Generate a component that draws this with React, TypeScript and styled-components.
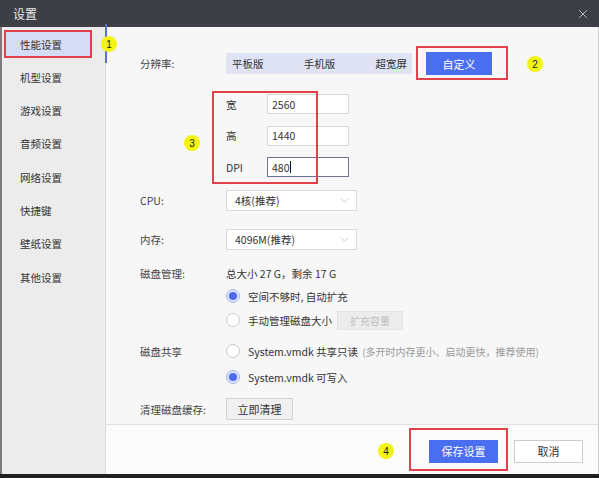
import React from "react";
import styled, { createGlobalStyle } from "styled-components";
import { ChevronDown, X } from "lucide-react";

const Global = createGlobalStyle`
  * { box-sizing: border-box; }
  html, body { margin: 0; padding: 0; background: #222; }
  body { font-family: "Noto Sans CJK SC", "Noto Sans", sans-serif; color: #333; }
`;

const Window = styled.div`
  position: relative;
  width: 599px;
  height: 478px;
  overflow: hidden;
  display: flex;
  flex-direction: column;
  background: #1f1f1f;
`;

const TitleBar = styled.div`
  height: 27px;
  flex: none;
  background: #3c3f46;
  color: #ececec;
  font-size: 12px;
  display: flex;
  align-items: center;
  justify-content: space-between;
  padding: 0 9px 0 13px;
`;

const CloseBtn = styled.div`
  display: flex;
  align-items: center;
  color: #d8d8d8;
`;

const Body = styled.div`
  height: 447px;
  flex: none;
  display: flex;
  border-left: 2px solid #7c7c7c;
  border-right: 1px solid #cfcfcf;
`;

const Sidebar = styled.div`
  width: 104px;
  flex: none;
  background: #ececec;
  border-right: 1px solid #dcdcdc;
  display: flex;
  flex-direction: column;
  padding-top: 0.4px;
`;

const NavItem = styled.div<{ $active?: boolean }>`
  position: relative;
  height: 33.3px;
  display: flex;
  align-items: center;
  font-size: 10.5px;
  color: #333;
  ${(p) =>
    p.$active &&
    `
    &::after {
      content: "";
      position: absolute;
      right: -2px;
      top: -3px;
      bottom: -2px;
      width: 2px;
      background: #5a6fd2;
    }
  `}
`;

const NavLabel = styled.div<{ $active?: boolean }>`
  margin-left: 2px;
  width: 88px;
  height: 28px;
  display: flex;
  align-items: center;
  padding-left: 14px;
  border: 2px solid ${(p) => (p.$active ? "#e0414a" : "transparent")};
  background: ${(p) => (p.$active ? "#d4dcf6" : "transparent")};
`;

const Main = styled.div`
  flex: 1;
  display: flex;
  flex-direction: column;
  background: #f7f7f7;
`;

const Content = styled.div`
  flex: 1;
  display: flex;
  flex-direction: column;
  padding-left: 34px;
`;

const Row = styled.div<{ $top: number; $h: number }>`
  display: grid;
  grid-template-columns: 86px 1fr;
  align-items: center;
  margin-top: ${(p) => p.$top}px;
  height: ${(p) => p.$h}px;
  font-size: 10.5px;
  color: #333;
`;

const Label = styled.div`
  font-size: 10.5px;
  color: #444;
`;

const Value = styled.div`
  display: flex;
  align-items: center;
  gap: 14px;
`;

const Segmented = styled.div`
  width: 186px;
  height: 21px;
  background: #dfe3f4;
  display: flex;
  align-items: center;
  justify-content: space-between;
  padding: 0 5px 0 6px;
`;

const SegItem = styled.div`
  font-size: 10.5px;
  color: #333;
`;

const PrimaryButton = styled.div<{ $w: number; $h: number }>`
  width: ${(p) => p.$w}px;
  height: ${(p) => p.$h}px;
  background: #4a6ef0;
  color: #fff;
  font-size: 11px;
  display: flex;
  align-items: center;
  justify-content: center;
`;

const FieldGroup = styled.div`
  display: flex;
  flex-direction: column;
  gap: 11.5px;
`;

const FieldRow = styled.div`
  display: grid;
  grid-template-columns: 41px 82px;
  align-items: center;
  height: 20px;
  font-size: 10.5px;
`;

const TextBox = styled.div<{ $focus?: boolean }>`
  height: 20px;
  background: #fff;
  border: 1px solid ${(p) => (p.$focus ? "#6f7291" : "#d6d6d6")};
  display: flex;
  align-items: center;
  padding-left: 4px;
  font-size: 10.5px;
  color: #333;
`;

const Caret = styled.span`
  display: inline-block;
  width: 1px;
  height: 12px;
  background: #111;
  margin-left: 1px;
`;

const Select = styled.div`
  width: 131px;
  height: 21px;
  background: #fff;
  border: 1px solid #d9d9d9;
  display: flex;
  align-items: center;
  justify-content: space-between;
  padding: 0 5px 0 8px;
  font-size: 10.5px;
  color: #333;
`;

const RadioLine = styled.div`
  display: flex;
  align-items: center;
  gap: 8px;
  font-size: 10.5px;
  color: #333;
`;

const RadioText = styled.span`
  display: flex;
  align-items: center;
  gap: 5px;
`;

const Radio = styled.span<{ $on?: boolean }>`
  position: relative;
  width: 14px;
  height: 14px;
  border-radius: 50%;
  flex: none;
  border: 1px solid ${(p) => (p.$on ? "#a7b6ef" : "#cbcbcb")};
  background: ${(p) => (p.$on ? "#dee5fb" : "#fff")};
  ${(p) =>
    p.$on &&
    `
    &::after {
      content: "";
      position: absolute;
      left: 2px; top: 2px;
      width: 8px; height: 8px;
      border-radius: 50%;
      background: #4b6cee;
    }
  `}
`;

const Note = styled.span`
  color: #9a9a9a;
  font-size: 10px;
  margin-left: 4px;
`;

const GhostButton = styled.div<{ $disabled?: boolean; $w: number; $h: number }>`
  width: ${(p) => p.$w}px;
  height: ${(p) => p.$h}px;
  display: flex;
  align-items: center;
  justify-content: center;
  font-size: ${(p) => (p.$disabled ? 10 : 11)}px;
  background: ${(p) => (p.$disabled ? "#ececec" : "#f0f0f0")};
  border: 1px solid ${(p) => (p.$disabled ? "#e2e2e2" : "#d2d2d2")};
  color: ${(p) => (p.$disabled ? "#bdbdbd" : "#333")};
`;

const Footer = styled.div`
  height: 50px;
  flex: none;
  border-top: 1px solid #e2e2e2;
  background: #fbfbfb;
  display: flex;
  align-items: center;
  justify-content: flex-end;
  gap: 16px;
  padding: 3px 15px 0 0;
`;

const CancelButton = styled.div`
  width: 69px;
  height: 23px;
  background: #fff;
  border: 1px solid #cdcdcd;
  display: flex;
  align-items: center;
  justify-content: center;
  font-size: 11px;
  color: #333;
`;

const Annot = styled.div<{ $x: number; $y: number; $w: number; $h: number }>`
  position: absolute;
  left: ${(p) => p.$x}px;
  top: ${(p) => p.$y}px;
  width: ${(p) => p.$w}px;
  height: ${(p) => p.$h}px;
  border: 2px solid #e0414a;
  pointer-events: none;
`;

const Badge = styled.div<{ $x: number; $y: number }>`
  position: absolute;
  left: ${(p) => p.$x - 8}px;
  top: ${(p) => p.$y - 8}px;
  width: 16px;
  height: 16px;
  border-radius: 50%;
  background: #f3f314;
  color: #222;
  font-family: "Liberation Sans", Arial, sans-serif;
  font-size: 10px;
  display: flex;
  align-items: center;
  justify-content: center;
`;

const navItems = ["性能设置", "机型设置", "游戏设置", "音频设置", "网络设置", "快捷键", "壁纸设置", "其他设置"];

export default function App() {
  return (
    <>
      <Global />
      <Window>
        <TitleBar>
          <span>设置</span>
          <CloseBtn>
            <X size={14} strokeWidth={1.4} />
          </CloseBtn>
        </TitleBar>
        <Body>
          <Sidebar>
            {navItems.map((n, i) => (
              <NavItem key={n} $active={i === 0}>
                <NavLabel $active={i === 0}>{n}</NavLabel>
              </NavItem>
            ))}
          </Sidebar>
          <Main>
            <Content>
              <Row $top={25} $h={23}>
                <Label>分辨率:</Label>
                <Value>
                  <Segmented>
                    <SegItem>平板版</SegItem>
                    <SegItem>手机版</SegItem>
                    <SegItem>超宽屏</SegItem>
                  </Segmented>
                  <PrimaryButton $w={66} $h={23}>自定义</PrimaryButton>
                </Value>
              </Row>
              <Row $top={19} $h={83}>
                <span />
                <FieldGroup>
                  <FieldRow>
                    <span>宽</span>
                    <TextBox>2560</TextBox>
                  </FieldRow>
                  <FieldRow>
                    <span>高</span>
                    <TextBox>1440</TextBox>
                  </FieldRow>
                  <FieldRow>
                    <span>DPI</span>
                    <TextBox $focus>
                      480
                      <Caret />
                    </TextBox>
                  </FieldRow>
                </FieldGroup>
              </Row>
              <Row $top={13} $h={21}>
                <Label>CPU:</Label>
                <Select>
                  <span>4核(推荐)</span>
                  <ChevronDown size={13} strokeWidth={1.3} color="#b3b3b3" />
                </Select>
              </Row>
              <Row $top={18} $h={21}>
                <Label>内存:</Label>
                <Select>
                  <span>4096M(推荐)</span>
                  <ChevronDown size={13} strokeWidth={1.3} color="#b3b3b3" />
                </Select>
              </Row>
              <Row $top={13} $h={20}>
                <Label>磁盘管理:</Label>
                <span>总大小 27 G，剩余 17 G</span>
              </Row>
              <Row $top={3} $h={20}>
                <span />
                <RadioLine>
                  <Radio $on />
                  空间不够时, 自动扩充
                </RadioLine>
              </Row>
              <Row $top={4} $h={20}>
                <span />
                <RadioLine>
                  <Radio />
                  <RadioText>
                    手动管理磁盘大小
                    <GhostButton $disabled $w={66} $h={19}>扩充容量</GhostButton>
                  </RadioText>
                </RadioLine>
              </Row>
              <Row $top={11} $h={20}>
                <Label>磁盘共享</Label>
                <RadioLine>
                  <Radio />
                  <span>
                    System.vmdk 共享只读
                    <Note>(多开时内存更小、启动更快，推荐使用)</Note>
                  </span>
                </RadioLine>
              </Row>
              <Row $top={6} $h={20}>
                <span />
                <RadioLine>
                  <Radio $on />
                  System.vmdk 可写入
                </RadioLine>
              </Row>
              <Row $top={11} $h={22}>
                <Label>清理磁盘缓存:</Label>
                <GhostButton $w={67} $h={22}>立即清理</GhostButton>
              </Row>
            </Content>
            <Footer>
              <PrimaryButton $w={69} $h={23}>保存设置</PrimaryButton>
              <CancelButton>取消</CancelButton>
            </Footer>
          </Main>
        </Body>

        <Annot $x={416} $y={46} $w={92} $h={34} />
        <Annot $x={212} $y={91} $w={106} $h={93} />
        <Annot $x={409} $y={428} $w={99} $h={43} />
        <Badge $x={109} $y={44}>1</Badge>
        <Badge $x={535} $y={64}>2</Badge>
        <Badge $x={192} $y={143}>3</Badge>
        <Badge $x={386} $y={451}>4</Badge>
      </Window>
    </>
  );
}
